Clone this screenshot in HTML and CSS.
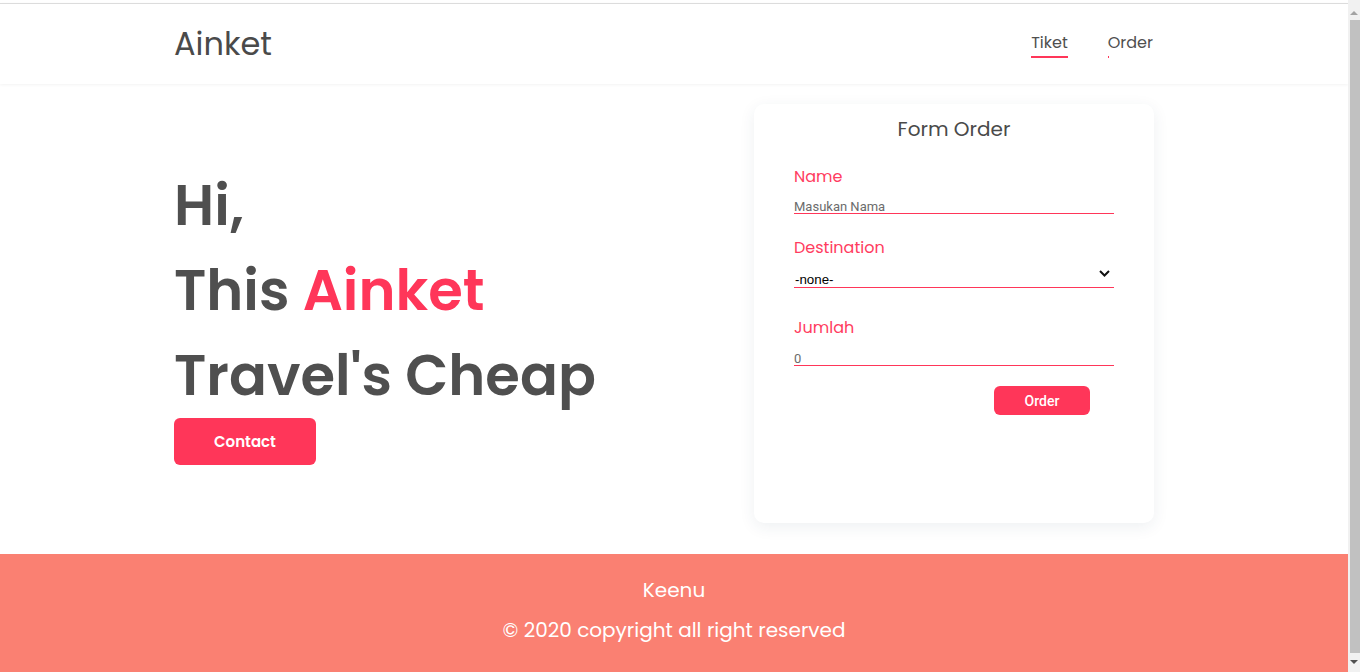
FILE: index.html
```html
<!DOCTYPE html>
<html lang="id">
<head>
<meta charset="utf-8">
<title>Ainket</title>
<link rel="stylesheet" href="styles.css">
</head>
<body>
<div class="page">
<header class="header">
  <div class="container header-inner">
    <div class="logo">Ainket</div>
    <nav class="nav">
      <a class="nav-link active" href="#">Tiket</a>
      <a class="nav-link" href="#">Order</a>
    </nav>
  </div>
</header>
<main class="main">
  <div class="container main-inner">
    <section class="hero">
      <h1 class="hero-title">Hi,<br>This <span class="accent">Ainket</span><br>Travel's Cheap</h1>
      <button class="btn-contact" type="button">Contact</button>
    </section>
    <form class="card">
      <h2 class="card-title">Form Order</h2>
      <label class="label label-name" for="name">Name</label>
      <div class="line field-name"><input class="field" id="name" type="text" placeholder="Masukan Nama"></div>
      <label class="label label-dest" for="dest">Destination</label>
      <div class="line select-wrap">
        <select class="select" id="dest">
          <option>-none-</option>
        </select>
        <svg class="chev" width="11" height="7" viewBox="0 0 11 7"><path d="M1 1 L5.5 5.5 L10 1" fill="none" stroke="#111" stroke-width="2"/></svg>
      </div>
      <label class="label label-jumlah" for="jumlah">Jumlah</label>
      <div class="line field-jumlah"><input class="field" id="jumlah" type="number" placeholder="0"></div>
      <button class="btn-order" type="button">Order</button>
    </form>
  </div>
</main>
<footer class="footer">
  <p class="footer-name">Keenu</p>
  <p class="footer-copy">© 2020 copyright all right reserved</p>
</footer>
</div>
<div class="scrollbar" aria-hidden="true">
  <svg class="sb-arrow" width="12" height="8" viewBox="0 0 12 8"><path d="M2 6 L6 2 L10 6 Z" fill="#a3a3a3"/></svg>
  <div class="sb-thumb"></div>
  <svg class="sb-arrow" width="12" height="8" viewBox="0 0 12 8"><path d="M2 2 L10 2 L6 6 Z" fill="#505050"/></svg>
</div>
</body>
</html>
```

FILE: styles.css
```css
* { box-sizing: border-box; }
html, body { margin: 0; padding: 0; }
body {
  font-family: "Poppins", "Open Sans", sans-serif;
  color: #4f4f4f;
  background: #fff;
}
.page { margin-right: 12px; }
.container {
  width: 1000px;
  margin: 0 auto;
  padding-right: 20px;
}
.header {
  margin-top: 3px;
  border-top: 1px solid #dcdcdc;
  height: 81px;
  box-shadow: 0 1px 3px rgba(0, 0, 0, 0.05);
  position: relative;
}
.header-inner {
  height: 80px;
  display: flex;
  align-items: center;
  justify-content: space-between;
}
.logo {
  font-size: 32px;
  font-weight: 400;
  color: #4a4a4a;
  margin-top: -1px;
}
.nav {
  display: flex;
  gap: 40px;
  margin-top: -4px;
  margin-right: 1px;
}
.nav-link {
  font-size: 16px;
  color: #4f4f4f;
  text-decoration: none;
  position: relative;
}
.nav-link::after {
  content: "";
  position: absolute;
  left: 0;
  bottom: -3px;
  width: 1px;
  height: 2px;
  background: #ff3659;
}
.nav-link.active::after { width: 100%; }
.main { padding: 20px 0 31px; }
.main-inner {
  display: flex;
  justify-content: space-between;
  align-items: center;
}
.hero-title {
  margin: 0;
  font-size: 56px;
  line-height: 85px;
  font-weight: 600;
  color: #4f4f4f;
}
.accent { color: #ff3659; }
.btn-contact {
  display: block;
  margin-top: 0;
  width: 142px;
  height: 47px;
  border: 0;
  border-radius: 6px;
  background: #ff3659;
  color: #fff;
  font-family: "Poppins", "Open Sans", sans-serif;
  font-weight: 600;
  font-size: 15px;
}
.card {
  width: 400px;
  height: 419px;
  margin: 0;
  padding: 10px 40px 0;
  border-radius: 10px;
  background: #fff;
  box-shadow: 0 4px 16px rgba(40, 60, 90, 0.08);
  display: flex;
  flex-direction: column;
}
.card-title {
  margin: 0;
  text-align: center;
  font-size: 20px;
  font-weight: 400;
  line-height: 30px;
  color: #4a4a4a;
}
.label {
  display: block;
  font-size: 16px;
  line-height: 24px;
  color: #ff3c60;
}
.label-name { margin-top: 21px; }
.label-dest { margin-top: 22px; }
.label-jumlah { margin-top: 28px; }
.line {
  width: 320px;
  border-bottom: 1px solid #ff3659;
}
.field {
  display: block;
  width: 320px;
  height: 19px;
  padding: 6px 0 0;
  border: 0;
  outline: none;
  font-family: Roboto, sans-serif;
  font-size: 13px;
  color: #555;
  background: transparent;
}
.field::placeholder { color: #6b6b6b; }
.field-name { margin-top: 5px; }
.field-jumlah { margin-top: 6px; }
.select-wrap {
  position: relative;
  margin-top: 7px;
}
.select {
  display: block;
  width: 320px;
  height: 20px;
  padding: 4px 0 0 1px;
  border: 0;
  border-radius: 0;
  appearance: none;
  -webkit-appearance: none;
  background: transparent;
  font-family: "Liberation Sans", Arial, sans-serif;
  font-size: 13.33px;
  color: #000;
  outline: none;
}
.chev {
  position: absolute;
  right: 4px;
  top: 3px;
}
.btn-order {
  margin-top: 20px;
  margin-left: 200px;
  width: 96px;
  height: 29px;
  border: 0;
  border-radius: 6px;
  background: #ff3659;
  color: #fff;
  font-family: Roboto, sans-serif;
  font-weight: 500;
  font-size: 14px;
}
.footer {
  background: #fa8072;
  color: #fff;
  text-align: center;
  padding: 16px 0 30px;
}
.footer p {
  margin: 0;
  font-size: 20px;
  line-height: 40px;
}
.scrollbar {
  position: fixed;
  top: 0;
  right: 0;
  bottom: 0;
  width: 12px;
  background: #f1f1f1;
  display: flex;
  flex-direction: column;
  align-items: flex-end;
  padding: 9px 0 6px;
}
.sb-arrow { flex: none; }
.sb-thumb {
  flex: 1;
  width: 10px;
  margin: 3px 0 5px;
  background: #c1c1c1;
}
```
